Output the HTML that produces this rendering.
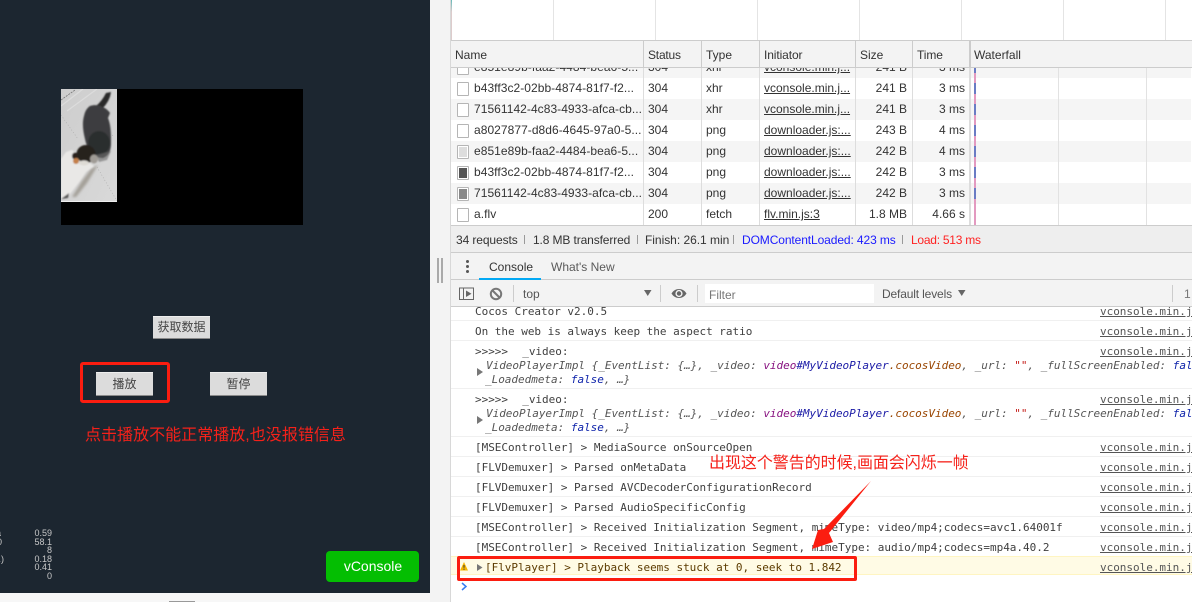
<!DOCTYPE html>
<html><head><meta charset="utf-8"><style>
html,body{margin:0;padding:0;width:1192px;height:602px;overflow:hidden;background:#fff}
body{position:relative;font-family:"Liberation Sans","Noto Sans CJK SC",sans-serif;font-size:12px;color:#333}
.a,.t,.m,.r,.c{position:absolute}
.t{white-space:nowrap;line-height:14px}
.r{left:452px;width:740px;height:21px}
.r span{position:absolute;top:3px;white-space:nowrap;line-height:15px}
.r .n{left:23px;letter-spacing:.05px}.r .s{left:197px}.r .y{left:255px}.r .i{left:313px;text-decoration:underline}
.r .z{right:284px}.r .e{right:226px}
.r .f{position:absolute;left:6px;top:4px;width:10px;height:12px;border:1px solid #b5b5b5;background:#fff;border-radius:1px}
.f i{position:absolute;left:1px;top:1px;width:8px;height:10px;display:block}
.m{font:11px/14px "DejaVu Sans Mono","Liberation Mono",monospace;color:#3f3f3f;white-space:pre;letter-spacing:-.02px}
.l{left:1100px;color:#555;text-decoration:underline;width:92px;overflow:hidden}
.c{left:451px;width:741px;height:1px;background:#f0f0f0}
.it{font-style:italic;color:#555}
.btn{position:absolute;background:#dcdcdc;border-bottom:1px solid #8a8a8a;border-top:1px solid #eee;box-sizing:border-box;text-align:center;color:#444;font-size:12px;filter:blur(.3px)}
.st{position:absolute;right:1140px;font:9px/9px "Liberation Sans",sans-serif;color:#c8c8c8;filter:blur(.25px)}
</style></head><body>

<!-- left game panel -->
<div class="a" style="left:0;top:0;width:430px;height:593px;background:#1c2630"></div>
<div class="a" style="left:430px;top:0;width:21px;height:602px;background:#f3f3f3"></div>
<div class="a" style="left:0;top:593px;width:430px;height:9px;background:#f7f7f7"></div>
<div class="a" style="left:169px;top:601px;width:26px;height:1px;background:#999"></div>
<div class="a" style="left:61px;top:89px;width:242px;height:136px;background:#000"></div>

<svg class="a" style="left:61px;top:89px" width="56" height="113" viewBox="0 0 56 113">
<defs><filter id="b" x="-20%" y="-20%" width="140%" height="140%"><feGaussianBlur stdDeviation=".7"/></filter>
<filter id="b2" x="-40%" y="-40%" width="180%" height="180%"><feGaussianBlur stdDeviation="1.300"/></filter>
<linearGradient id="g" x1="0" y1="0" x2="1" y2="1"><stop offset="0" stop-color="#cdcdcd"/><stop offset=".5" stop-color="#d3d3d3"/><stop offset="1" stop-color="#d9d9d9"/></linearGradient></defs>
<rect width="56" height="113" fill="url(#g)"/>
<rect y="112" width="56" height="1" fill="#eee"/>
<path d="M0 17L22 0M6 22L36 0" stroke="#dcdcdc" stroke-width="1.200" fill="none"/>
<path d="M0 11L14 1" stroke="#777" stroke-width=".8" fill="none" stroke-dasharray="2 1"/>
<path d="M0 26L17 50M36 78L56 112" stroke="#aaa" stroke-width=".6" stroke-dasharray="1 2" fill="none"/>
<path d="M52 46L47 50" stroke="#aaa" stroke-width=".6" stroke-dasharray="1 2" fill="none"/>
<path d="M37 76L30 80 21 92 11 108 15 108 26 94Z" fill="#a4a099" filter="url(#b2)"/>
<g filter="url(#b)">
<path d="M50 3Q49 12 41 20L35 17Q41 12 45 4Z" fill="#2c2c2c"/>
<path d="M29 17C37 14 46 19 49 24L47 29C50 36 50 46 50 54C50 63 47 67 42 69C33 69 26 61 24 50C22 42 21 34 23 27C24 22 26 19 29 17Z" fill="#3c3d3f"/>
<ellipse cx="38" cy="54" rx="11" ry="12" fill="#2c2d2f"/>
<path d="M50 62L46 71 38 73 35 66Z" fill="#6a6a6a" opacity=".6"/>
<path d="M0 70L5 63 11 61 20 68 33 77 25 83 19 92 9 105 3 109 0 110Z" fill="#e9e8e6"/>
<ellipse cx="25" cy="65" rx="9.500" ry="9" fill="#26231f"/>
<ellipse cx="33" cy="70" rx="4" ry="4.500" fill="#a09c96"/>
<ellipse cx="14" cy="67" rx="3" ry="3.500" fill="#2b211c"/>
<ellipse cx="15" cy="72" rx="3" ry="3" fill="#c48048"/>
<ellipse cx="23" cy="74" rx="5" ry="2.500" fill="#dedbd5"/>
<path d="M0 110L8 104 7 109Z" fill="#555"/>
</g>
</svg>

<div class="btn" style="left:153px;top:316px;width:57px;height:23px;line-height:21px">获取数据</div>
<div class="btn" style="left:96px;top:372px;width:57px;height:24px;line-height:22px">播放</div>
<div class="btn" style="left:210px;top:372px;width:57px;height:24px;line-height:22px">暂停</div>
<div class="a" style="left:80px;top:362px;width:84px;height:35px;border:3px solid #fb1d10;border-radius:3px"></div>
<div class="t" style="left:85px;top:427px;font-size:16px;line-height:18px;color:#f5211a;letter-spacing:.03px">点击播放不能正常播放,也没报错信息</div>

<div class="st" style="top:529px">0.59</div>
<div class="st" style="top:538px">58.1</div>
<div class="st" style="top:546px">8</div>
<div class="st" style="top:555px">0.18</div>
<div class="st" style="top:563px">0.41</div>
<div class="st" style="top:572px">0</div>
<div class="st" style="top:538px;right:1190px">0</div>
<div class="st" style="top:555px;right:1188px">.)</div>
<div class="st" style="top:529px;right:1191px">a</div>

<div class="a" style="left:326px;top:551px;width:93px;height:31px;background:#04be02;border-radius:4px;color:#fff;font-size:14px;line-height:31px;text-align:center;text-indent:1px">vConsole</div>

<!-- splitter bars -->
<div class="a" style="left:437px;top:258px;width:2px;height:25px;background:#aaa"></div>
<div class="a" style="left:441px;top:258px;width:2px;height:25px;background:#aaa"></div>
<div class="a" style="left:450px;top:0;width:1px;height:602px;background:#d8d8d8"></div>

<!-- overview -->
<div class="a" style="left:451px;top:0;width:741px;height:40px;background:#fff"></div>
<div class="a" style="left:451px;top:0;width:1px;height:40px;background:linear-gradient(#6bb,#dcc 30%,#dcc)"></div>
<div class="a" style="left:553px;top:0;width:1px;height:40px;background:#e4e4e4"></div>
<div class="a" style="left:655px;top:0;width:1px;height:40px;background:#e4e4e4"></div>
<div class="a" style="left:757px;top:0;width:1px;height:40px;background:#e4e4e4"></div>
<div class="a" style="left:859px;top:0;width:1px;height:40px;background:#e4e4e4"></div>
<div class="a" style="left:961px;top:0;width:1px;height:40px;background:#e4e4e4"></div>
<div class="a" style="left:1063px;top:0;width:1px;height:40px;background:#e4e4e4"></div>
<div class="a" style="left:1165px;top:0;width:1px;height:40px;background:#e4e4e4"></div>

<!-- rows -->
<div class="a" style="left:451px;top:67px;width:741px;height:158px;overflow:hidden">
<div class="r" style="left:0;top:-10px;background:#f5f5f5"><span class="f"></span><span class="n">e851e89b-faa2-4484-bea6-5...</span><span class="s">304</span><span class="y">xhr</span><span class="i">vconsole.min.j...</span><span class="z">241 B</span><span class="e">3 ms</span></div>
<div class="r" style="left:0;top:11px;background:#fff"><span class="f"></span><span class="n">b43ff3c2-02bb-4874-81f7-f2...</span><span class="s">304</span><span class="y">xhr</span><span class="i">vconsole.min.j...</span><span class="z">241 B</span><span class="e">3 ms</span></div>
<div class="r" style="left:0;top:32px;background:#f5f5f5"><span class="f"></span><span class="n">71561142-4c83-4933-afca-cb...</span><span class="s">304</span><span class="y">xhr</span><span class="i">vconsole.min.j...</span><span class="z">241 B</span><span class="e">3 ms</span></div>
<div class="r" style="left:0;top:53px;background:#fff"><span class="f"></span><span class="n">a8027877-d8d6-4645-97a0-5...</span><span class="s">304</span><span class="y">png</span><span class="i">downloader.js:...</span><span class="z">243 B</span><span class="e">4 ms</span></div>
<div class="r" style="left:0;top:74px;background:#f5f5f5"><span class="f"><i style="background:#ddd"></i></span><span class="n">e851e89b-faa2-4484-bea6-5...</span><span class="s">304</span><span class="y">png</span><span class="i">downloader.js:...</span><span class="z">242 B</span><span class="e">4 ms</span></div>
<div class="r" style="left:0;top:95px;background:#fff"><span class="f"><i style="background:#555"></i></span><span class="n">b43ff3c2-02bb-4874-81f7-f2...</span><span class="s">304</span><span class="y">png</span><span class="i">downloader.js:...</span><span class="z">242 B</span><span class="e">3 ms</span></div>
<div class="r" style="left:0;top:116px;background:#f5f5f5"><span class="f"><i style="background:#888"></i></span><span class="n">71561142-4c83-4933-afca-cb...</span><span class="s">304</span><span class="y">png</span><span class="i">downloader.js:...</span><span class="z">242 B</span><span class="e">3 ms</span></div>
<div class="r" style="left:0;top:137px;background:#fff"><span class="f"></span><span class="n">a.flv</span><span class="s">200</span><span class="y">fetch</span><span class="i">flv.min.js:3</span><span class="z">1.8 MB</span><span class="e">4.66 s</span></div>
</div>

<!-- column lines through rows -->
<div class="a" style="left:643px;top:41px;width:1px;height:184px;background:#ddd"></div>
<div class="a" style="left:701px;top:41px;width:1px;height:184px;background:#ddd"></div>
<div class="a" style="left:759px;top:41px;width:1px;height:184px;background:#ddd"></div>
<div class="a" style="left:855px;top:41px;width:1px;height:184px;background:#ddd"></div>
<div class="a" style="left:912px;top:41px;width:1px;height:184px;background:#ddd"></div>
<div class="a" style="left:969px;top:41px;width:2px;height:184px;background:#ddd"></div>
<div class="a" style="left:1058px;top:68px;width:1px;height:157px;background:#e2e2e2"></div>
<div class="a" style="left:1146px;top:68px;width:1px;height:157px;background:#e2e2e2"></div>
<div class="a" style="left:974px;top:68px;width:2px;height:157px;background:#e39ac0"></div>
<div class="a" style="left:974px;top:68px;width:2px;height:5px;background:#6a7cc4"></div>
<div class="a" style="left:974px;top:83px;width:2px;height:11px;background:#6a7cc4"></div>
<div class="a" style="left:974px;top:104px;width:2px;height:11px;background:#6a7cc4"></div>
<div class="a" style="left:974px;top:125px;width:2px;height:11px;background:#6a7cc4"></div>
<div class="a" style="left:974px;top:146px;width:2px;height:11px;background:#6a7cc4"></div>
<div class="a" style="left:974px;top:167px;width:2px;height:11px;background:#6a7cc4"></div>
<div class="a" style="left:974px;top:188px;width:2px;height:11px;background:#6a7cc4"></div>

<!-- header -->
<div class="a" style="left:451px;top:40px;width:741px;height:28px;box-sizing:border-box;background:#f3f3f3;border-top:1px solid #ccc;border-bottom:1px solid #ccc"></div>
<div class="a" style="left:643px;top:41px;width:1px;height:26px;background:#ccc"></div>
<div class="a" style="left:701px;top:41px;width:1px;height:26px;background:#ccc"></div>
<div class="a" style="left:759px;top:41px;width:1px;height:26px;background:#ccc"></div>
<div class="a" style="left:855px;top:41px;width:1px;height:26px;background:#ccc"></div>
<div class="a" style="left:912px;top:41px;width:1px;height:26px;background:#ccc"></div>
<div class="a" style="left:969px;top:41px;width:2px;height:26px;background:#ccc"></div>
<div class="t" style="left:455px;top:48px">Name</div>
<div class="t" style="left:648px;top:48px;letter-spacing:-.2px">Status</div>
<div class="t" style="left:706px;top:48px">Type</div>
<div class="t" style="left:764px;top:48px;letter-spacing:-.1px">Initiator</div>
<div class="t" style="left:860px;top:48px">Size</div>
<div class="t" style="left:917px;top:48px;letter-spacing:-.1px">Time</div>
<div class="t" style="left:974px;top:48px">Waterfall</div>

<!-- summary -->
<div class="a" style="left:451px;top:225px;width:741px;height:28px;box-sizing:border-box;background:#eee;border-top:1px solid #ccc;border-bottom:1px solid #ccc"></div>
<div class="t" style="left:456px;top:233px;letter-spacing:-.1px">34 requests</div>
<div class="a" style="left:524px;top:235px;width:1px;height:9px;background:#999"></div>
<div class="t" style="left:533px;top:233px;letter-spacing:-.12px">1.8 MB transferred</div>
<div class="a" style="left:637px;top:235px;width:1px;height:9px;background:#999"></div>
<div class="t" style="left:645px;top:233px;letter-spacing:-.03px">Finish: 26.1 min</div>
<div class="a" style="left:733px;top:235px;width:1px;height:9px;background:#999"></div>
<div class="t" style="left:742px;top:233px;color:#1a1aff;letter-spacing:-.1px">DOMContentLoaded: 423 ms</div>
<div class="a" style="left:902px;top:235px;width:1px;height:9px;background:#999"></div>
<div class="t" style="left:911px;top:233px;color:#f22;letter-spacing:-.25px">Load: 513 ms</div>

<!-- drawer tabs -->
<div class="a" style="left:451px;top:253px;width:741px;height:54px;background:#f3f3f3"></div>
<div class="a" style="left:451px;top:279px;width:741px;height:1px;background:#ccc"></div>
<div class="a" style="left:451px;top:306px;width:741px;height:1px;background:#ccc"></div>
<div class="a" style="left:466px;top:260px;width:3px;height:3px;border-radius:50%;background:#555"></div>
<div class="a" style="left:466px;top:265px;width:3px;height:3px;border-radius:50%;background:#555"></div>
<div class="a" style="left:466px;top:270px;width:3px;height:3px;border-radius:50%;background:#555"></div>
<div class="t" style="left:489px;top:260px;color:#333">Console</div>
<div class="a" style="left:479px;top:278px;width:62px;height:2px;background:#03a9f4"></div>
<div class="t" style="left:551px;top:260px;color:#5a5a5a">What's New</div>

<!-- toolbar -->
<svg class="a" style="left:455px;top:283px" width="240" height="22" viewBox="0 0 240 22" fill="none">
<rect x="4.500" y="5" width="14" height="11.500" stroke="#666"/>
<path d="M8.500 5V16.500" stroke="#666"/>
<path d="M11 7.500L16.500 10.700 11 14Z" fill="#666"/>
<circle cx="41" cy="11" r="5.200" stroke="#777" stroke-width="2"/>
<path d="M37 7L45 15" stroke="#777" stroke-width="2"/>
<path d="M58.500 2V19" stroke="#ccc"/>
<path d="M189 7L196.500 7 192.750 13Z" fill="#666"/>
<path d="M205.500 2V19" stroke="#ccc"/>
<path d="M216.500 10.500C220 4.500 228 4.500 231.500 10.500 228 16.500 220 16.500 216.500 10.500Z" fill="#666"/>
<circle cx="224" cy="10.500" r="3.600" fill="#f3f3f3"/>
<circle cx="224" cy="10.500" r="2.200" fill="#666"/>
</svg>
<div class="t" style="left:523px;top:287px;color:#555">top</div>
<div class="a" style="left:697px;top:285px;width:1px;height:17px;background:#ccc"></div>
<div class="a" style="left:705px;top:284px;width:169px;height:19px;background:#fff"></div>
<div class="t" style="left:709px;top:288px;color:#777">Filter</div>
<div class="t" style="left:882px;top:287px;color:#555;letter-spacing:-.15px">Default levels</div>
<svg class="a" style="left:958px;top:289px" width="9" height="8"><path d="M0 1H7.500L3.750 7Z" fill="#666"/></svg>
<div class="a" style="left:1172px;top:285px;width:1px;height:17px;background:#ccc"></div>
<div class="t" style="left:1184px;top:287px;color:#777">1</div>

<!-- console -->
<div class="a" style="left:451px;top:307px;width:741px;height:295px;background:#fff"></div>
<div class="c" style="top:320px"></div>
<div class="c" style="top:340px"></div>
<div class="c" style="top:388px"></div>
<div class="c" style="top:436px"></div>
<div class="c" style="top:456px"></div>
<div class="c" style="top:476px"></div>
<div class="c" style="top:496px"></div>
<div class="c" style="top:516px"></div>
<div class="c" style="top:536px"></div>
<div class="a" style="left:451px;top:556px;width:741px;height:19px;box-sizing:border-box;background:#fffbe5;border-top:1px solid #fff5c2;border-bottom:1px solid #fff5c2"></div>

<div class="m" style="left:475px;top:305px;clip-path:inset(2px 0 0 0)">Cocos Creator v2.0.5</div>
<div class="m" style="left:475px;top:325px">On the web is always keep the aspect ratio</div>
<div class="m" style="left:475px;top:345px">&gt;&gt;&gt;&gt;&gt;  <span style="margin-left:1px">_video:</span></div>
<div class="m it" style="left:486px;top:359px;width:706px;overflow:hidden">VideoPlayerImpl {_EventList: {…}, _video: <span style="color:#881280">video</span><span style="color:#1a1aa6">#MyVideoPlayer</span><span style="color:#994500">.cocosVideo</span>, _url: <span style="color:#c41a16">""</span>, _fullScreenEnabled: <span style="color:#0d22aa">false</span></div>
<div class="m it" style="left:485px;top:373px">_Loadedmeta: <span style="color:#0d22aa">false</span>, …}</div>
<div class="m" style="left:475px;top:393px">&gt;&gt;&gt;&gt;&gt;  <span style="margin-left:1px">_video:</span></div>
<div class="m it" style="left:486px;top:407px;width:706px;overflow:hidden">VideoPlayerImpl {_EventList: {…}, _video: <span style="color:#881280">video</span><span style="color:#1a1aa6">#MyVideoPlayer</span><span style="color:#994500">.cocosVideo</span>, _url: <span style="color:#c41a16">""</span>, _fullScreenEnabled: <span style="color:#0d22aa">false</span></div>
<div class="m it" style="left:485px;top:421px">_Loadedmeta: <span style="color:#0d22aa">false</span>, …}</div>
<svg class="a" style="left:477px;top:368px" width="6" height="8"><path d="M0 0L6 4 0 8Z" fill="#777"/></svg>
<svg class="a" style="left:477px;top:416px" width="6" height="8"><path d="M0 0L6 4 0 8Z" fill="#777"/></svg>
<div class="m" style="left:475px;top:441px">[MSEController] &gt; MediaSource onSourceOpen</div>
<div class="m" style="left:475px;top:461px">[FLVDemuxer] &gt; Parsed onMetaData</div>
<div class="m" style="left:475px;top:481px">[FLVDemuxer] &gt; Parsed AVCDecoderConfigurationRecord</div>
<div class="m" style="left:475px;top:501px">[FLVDemuxer] &gt; Parsed AudioSpecificConfig</div>
<div class="m" style="left:475px;top:521px">[MSEController] &gt; Received Initialization Segment, mimeType: video/mp4;codecs=avc1.64001f</div>
<div class="m" style="left:475px;top:541px">[MSEController] &gt; Received Initialization Segment, mimeType: audio/mp4;codecs=mp4a.40.2</div>
<div class="m" style="left:485px;top:561px;color:#5c3b00">[FlvPlayer] &gt; Playback seems stuck at 0, seek to 1.842</div>
<svg class="a" style="left:477px;top:564px" width="6" height="7"><path d="M0 0L5.500 3.500 0 7Z" fill="#777"/></svg>
<svg class="a" style="left:460px;top:562px" width="9" height="9"><path d="M4 0L8 8.500H0Z" fill="#f4b400"/><path d="M4 3V5.800M4 6.600V7.800" stroke="#333" stroke-width="1"/></svg>
<svg class="a" style="left:461px;top:582px" width="6" height="9" fill="none"><path d="M1 1L5 4.500 1 8" stroke="#367cf1" stroke-width="1.500"/></svg>

<div class="m l" style="top:305px;clip-path:inset(2px 0 0 0)">vconsole.min.js:2</div>
<div class="m l" style="top:325px">vconsole.min.js:2</div>
<div class="m l" style="top:345px">vconsole.min.js:2</div>
<div class="m l" style="top:393px">vconsole.min.js:2</div>
<div class="m l" style="top:441px">vconsole.min.js:2</div>
<div class="m l" style="top:461px">vconsole.min.js:2</div>
<div class="m l" style="top:481px">vconsole.min.js:2</div>
<div class="m l" style="top:501px">vconsole.min.js:2</div>
<div class="m l" style="top:521px">vconsole.min.js:2</div>
<div class="m l" style="top:541px">vconsole.min.js:2</div>
<div class="m l" style="top:561px">vconsole.min.js:2</div>

<!-- annotations -->
<div class="a" style="left:457px;top:556px;width:394px;height:19px;border:3px solid #fb1d10;border-radius:2px"></div>
<div class="t" style="left:709px;top:455px;font-size:16px;line-height:18px;color:#f5211a;letter-spacing:-.05px">出现这个警告的时候,画面会闪烁一帧</div>
<svg class="a" style="left:0;top:0" width="1192" height="602"><path d="M871 481L829 533 833 542 812 549 818 530 824 529Z" fill="#fb1d10"/></svg>
</body></html>
